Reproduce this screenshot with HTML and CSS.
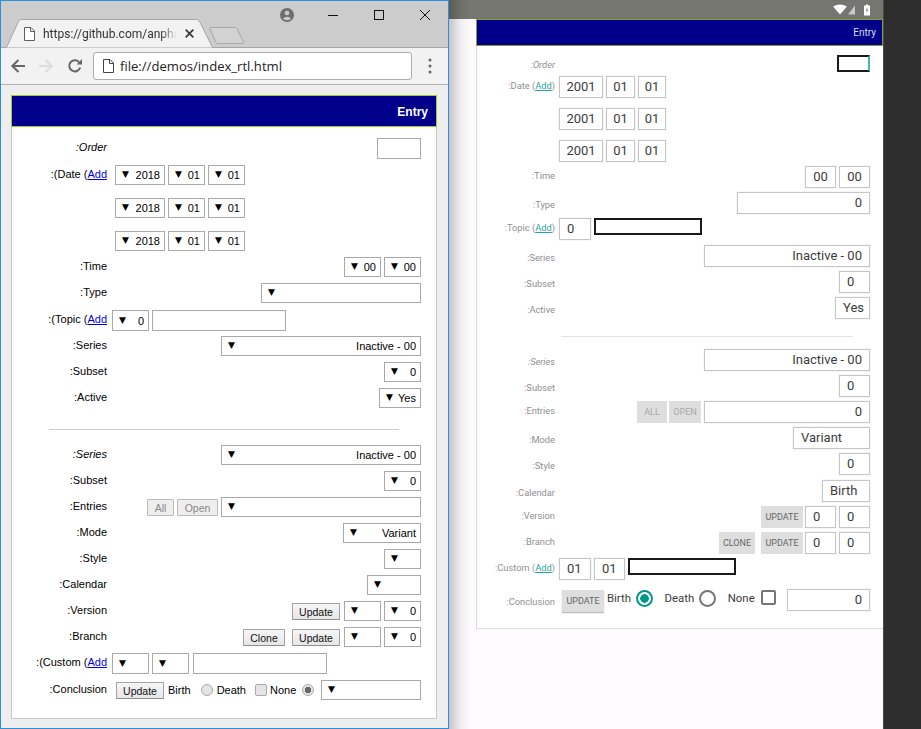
FILE: index.html
```html
<!DOCTYPE html>
<html lang="en">
<head>
<meta charset="utf-8">
<title>Entry form, desktop and device</title>
<link rel="stylesheet" href="styles.css">
</head>
<body>
<div class="desktop">

  <section class="device">
    <div class="statusbar">
      <svg class="status-icons" width="40" height="12" viewBox="0 0 40 12">
        <path d="M2 2.500Q9-1.500 16 2.500L9 10.500Z" fill="#fff"/>
        <path d="M24 1.500V10.500H17Z" fill="#c9c9c9"/>
        <path d="M33 1.500H35V0.500H37V1.500H39V11.500H33Z" fill="#fff"/>
        <path d="M36.500 3L34.800 6.500H35.800L35.300 9.500L37.200 5.500H36.200Z" fill="#777"/>
      </svg>
    </div>
    <div class="a-panel">
      <header class="a-head">Entry</header>
      <div class="a-body">
        <div class="a-row h21"><label class="a-lab i">:Order</label><div class="ctl"><input class="a-focus w33" aria-label="Order"></div></div>
        <div class="a-row h32"><label class="a-lab">:Date (<a href="#">Add</a>)</label><div class="ctl start"><div class="a-box w44 ctr">2001</div><div class="a-box w29 ctr">01</div><div class="a-box w28 ctr">01</div></div></div>
        <div class="a-row h32"><span class="a-lab"></span><div class="ctl start"><div class="a-box w44 ctr">2001</div><div class="a-box w29 ctr">01</div><div class="a-box w28 ctr">01</div></div></div>
        <div class="a-row h26"><span class="a-lab"></span><div class="ctl start"><div class="a-box w44 ctr">2001</div><div class="a-box w29 ctr">01</div><div class="a-box w28 ctr">01</div></div></div>
        <div class="a-row h26"><label class="a-lab">:Time</label><div class="ctl"><div class="a-box w31 ctr">00</div><div class="a-box w31 ctr">00</div></div></div>
        <div class="a-row h26"><label class="a-lab low">:Type</label><div class="ctl"><div class="a-box w133 end">0</div></div></div>
        <div class="a-row h27"><label class="a-lab">:Topic (<a href="#">Add</a>)</label><div class="ctl start"><div class="a-box w32">0</div><input class="a-black w108" aria-label="Topic"></div></div>
        <div class="a-row h26"><label class="a-lab low">:Series</label><div class="ctl"><div class="a-box w166 end">Inactive - 00</div></div></div>
        <div class="a-row h26"><label class="a-lab low">:Subset</label><div class="ctl"><div class="a-box w31">0</div></div></div>
        <div class="a-row h26"><label class="a-lab low">:Active</label><div class="ctl"><div class="a-box w35">Yes</div></div></div>
        <hr class="a-rule">
        <div class="a-row h26"><label class="a-lab low i">:Series</label><div class="ctl"><div class="a-box w166 end">Inactive - 00</div></div></div>
        <div class="a-row h26"><label class="a-lab low">:Subset</label><div class="ctl"><div class="a-box w31">0</div></div></div>
        <div class="a-row h26"><label class="a-lab">:Entries</label><div class="ctl"><button class="a-btn off w30">ALL</button><button class="a-btn off w32 nudge">OPEN</button><div class="a-box w166 end">0</div></div></div>
        <div class="a-row h26"><label class="a-lab low">:Mode</label><div class="ctl"><div class="a-box w77">Variant</div></div></div>
        <div class="a-row h27"><label class="a-lab low">:Style</label><div class="ctl"><div class="a-box w31">0</div></div></div>
        <div class="a-row h26"><label class="a-lab low">:Calendar</label><div class="ctl"><div class="a-box w48">Birth</div></div></div>
        <div class="a-row h26"><label class="a-lab">:Version</label><div class="ctl"><button class="a-btn w42">UPDATE</button><div class="a-box w31">0</div><div class="a-box w31">0</div></div></div>
        <div class="a-row h26"><label class="a-lab">:Branch</label><div class="ctl"><button class="a-btn w36 wide">CLONE</button><button class="a-btn w42">UPDATE</button><div class="a-box w31">0</div><div class="a-box w31">0</div></div></div>
        <div class="a-row h31"><label class="a-lab">:Custom (<a href="#">Add</a>)</label><div class="ctl start"><div class="a-box w32">01</div><div class="a-box w31">01</div><input class="a-black w108" aria-label="Custom"></div></div>
        <div class="a-row h26"><label class="a-lab low">:Conclusion</label>
          <div class="ctl start a-concl">
            <button class="a-btn raised w42">UPDATE</button>
            <span class="a-opt">Birth</span><input class="a-radio on" type="radio" name="a" checked aria-label="Birth">
            <span class="a-opt sp">Death</span><input class="a-radio" type="radio" name="a" aria-label="Death">
            <span class="a-opt sp">None</span><input class="a-check" type="checkbox" aria-label="None">
            <div class="a-box w83 end push">0</div>
          </div>
        </div>
      </div>
    </div>
    <div class="edge-shade"></div>
  </section>

  <div class="bezel"></div>

  <section class="browser">
    <div class="titlebar">
      <div class="tab">
        <svg class="tab-shape" width="207" height="29" viewBox="0 0 207 29"><path d="M0.500 28.500L12.500 2.500Q13.500 0.500 15.500 0.500H190.500Q192.500 0.500 193.500 2.500L206.500 28.500" fill="#f2f2f2" stroke="#a6a6a6"/></svg>
        <svg class="doc" width="11" height="14" viewBox="0 0 11 14"><path d="M0.500 0.500H7L10.500 4V13.500H0.500ZM6.500 0.500V4.500H10.500" fill="#fff" stroke="#5f5f5f"/></svg>
        <span class="tab-title">https://github.com/anpha</span>
        <svg class="tab-x" width="9" height="9" viewBox="0 0 9 9"><path d="M0.700 0.700L8.300 8.300M8.300 0.700L0.700 8.300" stroke="#3c3c3c" stroke-width="1.800"/></svg>
      </div>
      <svg class="newtab" width="36" height="19" viewBox="0 0 36 19"><path d="M1.500 1.500H26.500Q27.500 1.500 28 2.500L34.500 16Q35 17.500 33.500 17.500H8.500Q7.500 17.500 7 16.500L0.800 2.500Q0.500 1.500 1.500 1.500Z" fill="#d2d2d2" stroke="#a8a8a8"/></svg>
      <div class="win-btns">
        <div class="win-btn"><svg width="16" height="16" viewBox="0 0 16 16"><circle cx="8" cy="8" r="7" fill="#6e6e6e"/><circle cx="8" cy="6" r="2.300" fill="#ccc"/><path d="M3.800 11.800Q8 7.800 12.200 11.800Q8 14.500 3.800 11.800Z" fill="#ccc"/></svg></div>
        <div class="win-btn"><svg width="10" height="10" viewBox="0 0 10 10"><path d="M0 5.500H10" stroke="#111"/></svg></div>
        <div class="win-btn"><svg width="10" height="10" viewBox="0 0 10 10"><rect x="0.500" y="0.500" width="9" height="9" fill="none" stroke="#111"/></svg></div>
        <div class="win-btn"><svg width="10" height="10" viewBox="0 0 10 10"><path d="M0 0L10 10M10 0L0 10" stroke="#111"/></svg></div>
      </div>
    </div>
    <div class="toolbar">
      <svg class="nav back" width="16" height="16" viewBox="0 0 16 16"><path d="M15 8H2.500M8.500 2L2.300 8L8.500 14" fill="none" stroke="#666" stroke-width="2"/></svg>
      <svg class="nav fwd" width="16" height="16" viewBox="0 0 16 16"><path d="M1 8H13.500M7.500 2L13.700 8L7.500 14" fill="none" stroke="#dcdcdc" stroke-width="2"/></svg>
      <svg class="nav reload" width="16" height="16" viewBox="0 0 16 16"><path d="M13.200 9.500A5.600 5.600 0 1 1 12 4" fill="none" stroke="#666" stroke-width="2"/><path d="M9.500 6.500H15V1Z" fill="#666"/></svg>
      <div class="omnibox">
        <svg width="11" height="14" viewBox="0 0 11 14"><path d="M0.500 0.500H7L10.500 4V13.500H0.500ZM6.500 0.500V4.500H10.500" fill="#fff" stroke="#444"/></svg>
        <span>file://demos/index_rtl.html</span>
      </div>
      <svg class="menu" width="4" height="16" viewBox="0 0 4 16"><circle cx="2" cy="2" r="1.500" fill="#666"/><circle cx="2" cy="8" r="1.500" fill="#666"/><circle cx="2" cy="14" r="1.500" fill="#666"/></svg>
    </div>
    <div class="page">
      <div class="w-panel">
        <header class="w-head">Entry</header>
        <div class="w-body">
          <div class="w-row h27"><label class="w-lab i">:Order</label><div class="ctl"><input class="w-input w44 tall" aria-label="Order"></div></div>
          <div class="w-row h33"><label class="w-lab">:(Date (<a href="#">Add</a></label><div class="ctl start in3"><div class="sel w50"><i>▼</i>2018</div><div class="sel w37"><i>▼</i>01</div><div class="sel w37"><i>▼</i>01</div></div></div>
          <div class="w-row h33"><span class="w-lab"></span><div class="ctl start in3"><div class="sel w50"><i>▼</i>2018</div><div class="sel w37"><i>▼</i>01</div><div class="sel w37"><i>▼</i>01</div></div></div>
          <div class="w-row h26"><span class="w-lab"></span><div class="ctl start in3"><div class="sel w50"><i>▼</i>2018</div><div class="sel w37"><i>▼</i>01</div><div class="sel w37"><i>▼</i>01</div></div></div>
          <div class="w-row h26"><label class="w-lab">:Time</label><div class="ctl"><div class="sel w37"><i>▼</i>00</div><div class="sel w37"><i>▼</i>00</div></div></div>
          <div class="w-row h27"><label class="w-lab">:Type</label><div class="ctl"><div class="sel w160"><i>▼</i></div></div></div>
          <div class="w-row h26"><label class="w-lab">:(Topic (<a href="#">Add</a></label><div class="ctl start"><div class="sel w37 tall"><i>▼</i>0</div><input class="w-input w134 tall" aria-label="Topic"></div></div>
          <div class="w-row h26"><label class="w-lab">:Series</label><div class="ctl"><div class="sel w200"><i>▼</i>Inactive - 00</div></div></div>
          <div class="w-row h26"><label class="w-lab">:Subset</label><div class="ctl"><div class="sel w37"><i>▼</i>0</div></div></div>
          <div class="w-row h26"><label class="w-lab">:Active</label><div class="ctl"><div class="sel w42"><i>▼</i>Yes</div></div></div>
          <hr class="w-rule">
          <div class="w-row h26"><label class="w-lab i">:Series</label><div class="ctl"><div class="sel w200"><i>▼</i>Inactive - 00</div></div></div>
          <div class="w-row h26"><label class="w-lab">:Subset</label><div class="ctl"><div class="sel w37"><i>▼</i>0</div></div></div>
          <div class="w-row h26"><label class="w-lab">:Entries</label><div class="ctl"><button class="w-btn off w27">All</button><button class="w-btn off w41">Open</button><div class="sel w200"><i>▼</i></div></div></div>
          <div class="w-row h26"><label class="w-lab">:Mode</label><div class="ctl"><div class="sel w78"><i>▼</i>Variant</div></div></div>
          <div class="w-row h26"><label class="w-lab">:Style</label><div class="ctl"><div class="sel w37"><i>▼</i></div></div></div>
          <div class="w-row h26"><label class="w-lab">:Calendar</label><div class="ctl"><div class="sel w54"><i>▼</i></div></div></div>
          <div class="w-row h26"><label class="w-lab">:Version</label><div class="ctl"><button class="w-btn w48">Update</button><div class="sel w37"><i>▼</i></div><div class="sel w37"><i>▼</i>0</div></div></div>
          <div class="w-row h26"><label class="w-lab">:Branch</label><div class="ctl"><button class="w-btn w42 clone">Clone</button><button class="w-btn w48">Update</button><div class="sel w37"><i>▼</i></div><div class="sel w37"><i>▼</i>0</div></div></div>
          <div class="w-row h27"><label class="w-lab">:(Custom (<a href="#">Add</a></label><div class="ctl start"><div class="sel w37 tall"><i>▼</i></div><div class="sel w37 tall"><i>▼</i></div><input class="w-input w134 tall gapx" aria-label="Custom"></div></div>
          <div class="w-row h26"><label class="w-lab">:Conclusion</label>
            <div class="ctl start w-concl">
              <button class="w-btn w48">Update</button>
              <span class="w-opt">Birth</span><input class="w-radio m10" type="radio" name="w" aria-label="Birth">
              <span class="w-opt">Death</span><input class="w-check" type="checkbox" aria-label="None">
              <span class="w-opt">None</span><input class="w-radio m6 on" type="radio" name="w" checked aria-label="Selected">
              <div class="sel w100 push"><i>▼</i></div>
            </div>
          </div>
        </div>
      </div>
    </div>
  </section>
</div>
</body>
</html>
```

FILE: styles.css
```css
* { box-sizing: border-box; }
html, body { margin: 0; padding: 0; height: 100%; }
body { overflow: hidden; background: #2f2f2f; font-family: "Liberation Sans", Arial, sans-serif; }
.desktop { position: relative; width: 921px; height: 729px; overflow: hidden; }

/* windows on the desktop */
.browser { position: absolute; left: 0; top: 0; width: 449px; height: 729px; display: flex; flex-direction: column; border: 1px solid #2a8fdc; background: #eee; }
.device { position: absolute; left: 449px; top: 0; width: 434px; height: 729px; background: #fdfbfe; }
.bezel { position: absolute; left: 883px; top: 0; width: 38px; height: 729px; background: #2e2e2e; border-left: 1px solid #4a4a4a; }
.edge-shade { position: absolute; left: 0; top: 0; width: 22px; height: 100%; background: linear-gradient(to right, rgba(0,0,0,.22), rgba(0,0,0,.05) 55%, rgba(0,0,0,0)); pointer-events: none; }

/* chrome */
.titlebar { flex: none; height: 47px; display: flex; background: #ccc; border-bottom: 1px solid #a6a6a6; padding-left: 5px; }
.tab { position: relative; flex: none; width: 207px; height: 29px; margin-top: 18px; display: flex; align-items: center; padding: 0 0 0 18px; z-index: 1; }
.tab-shape { position: absolute; left: 0; top: 0; }
.doc { position: relative; flex: none; margin-top: 1px; }
.tab-title { position: relative; width: 134px; margin-left: 8px; overflow: hidden; white-space: nowrap; font: 12px Roboto, sans-serif; color: #333; -webkit-mask-image: linear-gradient(to right, #000 88%, transparent); mask-image: linear-gradient(to right, #000 88%, transparent); }
.tab-x { position: relative; margin-left: 8px; flex: none; }
.newtab { flex: none; margin: 25px 0 0 -4px; }
.win-btns { display: flex; margin-left: auto; }
.win-btn { width: 46px; height: 28px; display: flex; align-items: center; justify-content: center; }
.toolbar { flex: none; height: 37px; display: flex; align-items: center; background: #f2f2f2; border-bottom: 1px solid #b4b4b4; padding-left: 9px; padding-bottom: 1px; }
.nav { flex: none; }
.back { margin-right: 12px; }
.fwd { margin-right: 13px; }
.reload { margin-right: 10px; }
.omnibox { flex: none; width: 319px; height: 28px; display: flex; align-items: center; gap: 6px; padding-left: 9px; background: #fff; border: 1px solid #adadad; border-radius: 3px; font: 13.100px "Open Sans", sans-serif; color: #222; }
.menu { flex: none; margin-left: 16px; }
.page { flex: 1; padding: 10px 0 0 10px; }

/* shared control row parts */
.ctl { flex: 1; display: flex; gap: 3px; justify-content: flex-end; align-items: flex-start; min-width: 0; }
.ctl.start { justify-content: flex-start; }
.push { margin-left: auto; }
.i { font-style: italic; }
.h21 { height: 21px; } .h26 { height: 26px; } .h27 { height: 27px; } .h31 { height: 31px; } .h32 { height: 32px; } .h33 { height: 33px; }
.w27 { width: 27px; } .w28 { width: 28px; } .w29 { width: 29px; } .w30 { width: 30px; } .w31 { width: 31px; } .w32 { width: 32px; } .w33 { width: 33px; } .w35 { width: 35px; } .w36 { width: 36px; } .w37 { width: 37px; } .w41 { width: 41px; } .w42 { width: 42px; } .w44 { width: 44px; } .w48 { width: 48px; } .w50 { width: 50px; } .w54 { width: 54px; } .w77 { width: 77px; } .w78 { width: 78px; } .w83 { width: 83px; } .w100 { width: 100px; } .w108 { width: 108px; } .w133 { width: 133px; } .w134 { width: 134px; } .w160 { width: 160px; } .w166 { width: 166px; } .w200 { width: 200px; }

/* desktop form */
.w-panel { width: 426px; height: 624px; background: #fff; border: 1px solid #c8c8c8; }
.w-head { height: 32px; margin: -1px -1px 0; padding-right: 8px; background: #00008b; border: 1px solid #9acd32; color: #fff; font-weight: 700; font-size: 12px; line-height: 32px; text-align: right; }
.w-body { padding-top: 11px; }
.w-row { display: flex; padding-right: 15px; font-size: 11px; color: #000; }
.w-lab { flex: none; width: 95px; margin-right: 5px; text-align: right; line-height: 18px; white-space: nowrap; }
.w-lab a { color: #00e; }
.in3 { padding-left: 3px; }
.sel { flex: none; height: 20px; display: flex; align-items: center; justify-content: space-between; padding: 0 4px 0 6px; border: 1px solid #a9a9a9; background: #fff; font-size: 11px; line-height: 18px; }
.sel i { font: normal 9px/16px "DejaVu Sans", sans-serif; margin-bottom: 2px; }
.sel.tall { height: 21px; }
.w-input { height: 21px; padding: 0; border: 1px solid #a9a9a9; background: #fff; }
.gapx { margin-left: 1px; }
.w-rule { height: 1px; margin: 15px 37px 15px 37px; border: 0; background: #ccc; }
.w-btn { flex: none; height: 17px; margin: 2px 1px 0 0; padding: 0; border: 1px solid #a3a3a3; border-bottom-color: #8e8e8e; border-radius: 1px; background: linear-gradient(#f6f6f6, #e6e6e6); font: 10.500px "Liberation Sans", sans-serif; color: #111; }
.w-btn.off { background: #eee; border-color: #bbb; color: #888; margin-right: 0; }
.w-btn.clone { margin-right: 4px; }
.w-concl { padding-left: 4px; gap: 0; }
.w-concl .w-btn { margin-right: 4px; }
.w-opt { line-height: 20px; }
.w-radio, .w-check { -webkit-appearance: none; appearance: none; flex: none; margin: 4px 0 0; width: 12px; height: 12px; border: 1px solid #aaa; background: #e4e4e4; }
.w-radio { border-radius: 50%; }
.w-radio.m10 { margin-left: 10px; margin-right: 4px; }
.w-radio.m6 { margin-left: 6px; }
.w-radio.on { background: radial-gradient(circle, #666 0 3px, #e4e4e4 3.5px); }
.w-check { margin-left: 9px; margin-right: 3px; border-radius: 2px; }

/* android form */
.statusbar { height: 19px; background: #75766f; display: flex; justify-content: flex-end; align-items: flex-start; padding: 4px 12px 0 0; }
.status-icons { display: block; }
.a-panel { margin-left: 27px; height: 610px; background: #fff; border-left: 1px solid #d8d8d8; border-bottom: 1px solid #ddd; }
.a-head { height: 27px; margin-left: -1px; padding-right: 6px; background: #00008b; border: 1px solid #7f9f30; color: #dcdcf5; font: 10px/25px Roboto, sans-serif; text-align: right; }
.a-body { padding-top: 9px; font-family: Roboto, sans-serif; }
.a-row { display: flex; padding-right: 13px; }
.a-lab { flex: none; width: 78px; margin-right: 4px; text-align: right; font-size: 9.300px; line-height: 20px; color: #8f8f8f; white-space: nowrap; }
.a-lab.low { padding-top: 3px; }
.a-lab a { color: #26a69a; }
.a-box { flex: none; height: 22px; padding: 0 7px; border: 1px solid #c6c6c6; box-shadow: 0 0 1px #ccc; background: #fff; font-size: 13px; line-height: 20px; color: #3c3c3c; white-space: nowrap; }
.a-box.ctr { text-align: center; padding: 0; }
.a-box.end { text-align: right; }
.a-focus { height: 17px; padding: 0; border: 2px solid #1a1a1a; border-right-color: #4db6ac; background: #fff; }
.a-black { height: 17px; padding: 0; border: 2px solid #1a1a1a; background: #fff; }
.a-rule { height: 1px; margin: 13px 30px 12px 84px; border: 0; background: #e2e2e2; }
.a-btn { flex: none; height: 22px; padding: 0; border: 0; background: #dedede; font: 400 9px Roboto, sans-serif; color: #666; }
.a-btn.off { color: #a8a8a8; }
.a-btn.nudge { margin-left: -1px; }
.a-btn.wide { margin-right: 3px; }
.a-btn.raised { margin: 1px 3px 0 3px; box-shadow: 0 1px 1px #bbb; }
.a-row .a-btn.w42 + .a-box { margin-left: -1px; }
.a-concl { gap: 0; }
.a-opt { font-size: 11.400px; line-height: 18px; color: #3c3c3c; }
.a-opt.sp { margin-left: 12px; }
.a-radio { -webkit-appearance: none; appearance: none; flex: none; width: 17px; height: 17px; margin: 1px 0 0 4.500px; border: 2px solid #757575; border-radius: 50%; background: #fff; }
.a-radio.on { border-color: #009688; background: radial-gradient(circle, #009688 0 4px, #fff 4.5px); }
.a-check { -webkit-appearance: none; appearance: none; flex: none; width: 15px; height: 15px; margin: 1px 0 0 6px; border: 2px solid #757575; border-radius: 2px; background: #fff; }
```
